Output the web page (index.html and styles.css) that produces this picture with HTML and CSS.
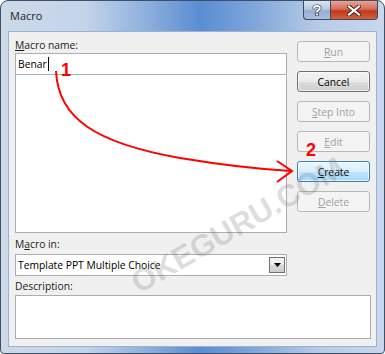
FILE: index.html
```html
<!DOCTYPE html>
<html lang="en">
<head>
    <meta charset="UTF-8">
    <title>Macro</title>
    <link rel="stylesheet" href="styles.css">
</head>
<body>
    <div class="window">
        <div class="titlebar">
            <span class="title">Macro</span>
            <div class="caption-buttons">
                <div class="cap-btn help">
                    <svg width="12" height="12" viewBox="0 0 12 12">
                        <path d="M3 4 C3 1.5 9 1.2 9 4 C9 6 6 6 6 8" fill="none" stroke="#3a4a5c" stroke-width="3.2" stroke-linecap="round"/>
                        <path d="M3 4 C3 1.5 9 1.2 9 4 C9 6 6 6 6 8" fill="none" stroke="#fff" stroke-width="1.8" stroke-linecap="round"/>
                        <rect x="4.6" y="9.2" width="2.8" height="2.6" fill="#fff" stroke="#3a4a5c" stroke-width="0.8"/>
                    </svg>
                </div>
                <div class="cap-btn close">
                    <svg width="14" height="11" viewBox="0 0 14 11">
                        <path d="M2 1.5 L12 9.5 M12 1.5 L2 9.5" stroke="#4a1d18" stroke-width="4" stroke-linecap="square"/>
                        <path d="M2 1.5 L12 9.5 M12 1.5 L2 9.5" stroke="#fff" stroke-width="2.2" stroke-linecap="square"/>
                    </svg>
                </div>
            </div>
        </div>

        <div class="client">
            <div class="main">
                <div class="left">
                    <div class="lbl"><u>M</u>acro name:</div>
                    <div class="name-input">Benar<span class="caret"></span></div>
                    <div class="macro-list"></div>
                    <div class="lbl lbl-in">M<u>a</u>cro in:</div>
                    <div class="select">
                        <span>Template PPT Multiple Choice</span>
                        <span class="drop">
                            <svg width="7" height="4" viewBox="0 0 7 4"><path d="M0 0 H7 L3.5 4 Z" fill="#000"/></svg>
                        </span>
                    </div>
                </div>
                <div class="buttons">
                    <button class="btn" disabled><u>R</u>un</button>
                    <button class="btn">Cancel</button>
                    <button class="btn" disabled><u>S</u>tep Into</button>
                    <button class="btn" disabled><u>E</u>dit</button>
                    <button class="btn default"><u>C</u>reate</button>
                    <button class="btn" disabled><u>D</u>elete</button>
                </div>
            </div>
            <div class="lbl lbl-desc">Description:</div>
            <div class="desc"></div>
        </div>

        <svg class="annotations" width="385" height="354" viewBox="0 0 385 354">
            <path d="M56 71 C58 118 95 143 180 158 Q240 168 291 171" fill="none" stroke="#f00" stroke-width="2"/>
            <path d="M277 161 L292 171 L277 182" fill="none" stroke="#f00" stroke-width="2"/>
            <text x="61" y="76" class="num">1</text>
            <text x="306" y="156" class="num">2</text>
        </svg>
        <div class="watermark">OKEGURU.COM</div>
    </div>
</body>
</html>
```

FILE: styles.css
```css
body {
    margin: 0;
    background: #fff;
    font-family: "Open Sans", "Noto Sans", sans-serif;
    font-size: 10.3px;
    color: #000;
}
.window {
    position: relative;
    width: 385px;
    height: 354px;
    box-sizing: border-box;
    border: 1px solid #3f4f66;
    border-radius: 8px 8px 4px 4px;
    background: linear-gradient(90deg, #cdd9e7 0%, #c3d4ea 22%, #86abdc 40%, #5a8dd2 52%, #7fa6da 66%, #b4cae6 82%, #c9d8ec 100%);
    padding: 0 7px 7px 7px;
    overflow: hidden;
}
.titlebar {
    height: 30px;
    display: flex;
    align-items: flex-start;
    justify-content: space-between;
}
.title {
    margin: 7px 0 0 2px;
    font-size: 11px;
    color: #1e1e1e;
}
.caption-buttons {
    display: flex;
    margin-right: -1px;
}
.cap-btn {
    height: 18px;
    display: flex;
    align-items: center;
    justify-content: center;
    border: 1px solid #3b4a60;
    border-top: none;
}
.help {
    width: 26px;
    border-radius: 0 0 0 4px;
    background: linear-gradient(#dbe5f1 0%, #b8c9de 45%, #95add0 55%, #a9c0de 100%);
    border-right: none;
}
.close {
    width: 46px;
    border-radius: 0 0 4px 0;
    background: linear-gradient(#e8a493 0%, #d56d5a 45%, #c0391f 55%, #d2603f 100%);
}
.client {
    height: 316px;
    box-sizing: border-box;
    background: #f0f0f0;
    border: 1px solid #9bb1cf;
    padding: 6px 5px 0 6px;
}
.main {
    display: flex;
    gap: 10px;
}
.left {
    width: 272px;
}
.lbl {
    height: 15px;
    line-height: 15px;
    color: #1a1a1a;
}
.name-input {
    height: 22px;
    box-sizing: border-box;
    background: #fff;
    border: 1px solid #abadb3;
    padding: 0 0 0 2px;
    line-height: 20px;
    display: flex;
    align-items: center;
}
.caret {
    display: inline-block;
    width: 1px;
    height: 14px;
    background: #000;
    margin-left: 1px;
}
.macro-list {
    height: 158px;
    box-sizing: border-box;
    background: #fff;
    border: 1px solid #abadb3;
    border-top: none;
}
.lbl-in {
    height: 21px;
    line-height: 19px;
    display: flex;
    align-items: flex-end;
}
.select {
    height: 22px;
    box-sizing: border-box;
    background: #fff;
    border: 1px solid #abadb3;
    display: flex;
    align-items: center;
    justify-content: space-between;
    padding: 0 1px 0 2px;
}
.drop {
    width: 16px;
    height: 16px;
    box-sizing: border-box;
    border: 1px solid #707070;
    background: linear-gradient(#f2f2f2 0%, #ebebeb 50%, #d6d6d6 51%, #cfcfcf 100%);
    display: flex;
    align-items: center;
    justify-content: center;
}
.buttons {
    display: flex;
    flex-direction: column;
    gap: 9px;
    padding-top: 3px;
}
.btn {
    width: 73px;
    height: 21px;
    padding: 0;
    font-family: inherit;
    font-size: 10.3px;
    color: #000;
    border: 1px solid #707070;
    border-radius: 3px;
    background: linear-gradient(#f2f2f2 0%, #ebebeb 50%, #dddddd 51%, #cfcfcf 100%);
    box-shadow: inset 0 0 0 1px rgba(255, 255, 255, 0.7);
}
.btn:disabled {
    color: #a0a0a0;
    border-color: #b5b9bc;
    background: #f4f4f4;
    box-shadow: none;
}
.btn.default {
    border-color: #3c7fb1;
    background: linear-gradient(#eaf6fd 0%, #d9f0fc 50%, #bee6fd 51%, #a7d9f5 100%);
}
.lbl-desc {
    height: 19px;
    line-height: 17px;
    display: flex;
    align-items: flex-end;
}
.desc {
    width: 356px;
    height: 44px;
    box-sizing: border-box;
    background: #fff;
    border: 1px solid #abadb3;
}
.annotations {
    position: absolute;
    left: -1px;
    top: -1px;
    pointer-events: none;
}
.num {
    font-family: "Liberation Sans", Arial, sans-serif;
    font-weight: bold;
    font-size: 18px;
    fill: #f00;
}
.watermark {
    position: absolute;
    left: 142px;
    top: 264px;
    font-family: "Liberation Sans", Arial, sans-serif;
    font-weight: bold;
    font-size: 31px;
    color: rgba(120, 120, 120, 0.25);
    transform: rotate(-30deg);
    transform-origin: left bottom;
    white-space: nowrap;
    pointer-events: none;
}
```
